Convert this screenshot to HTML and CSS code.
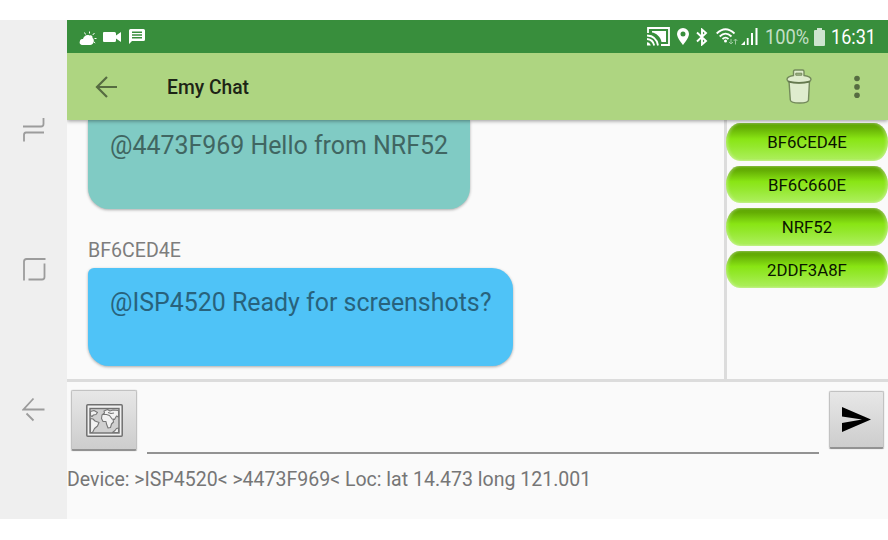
FILE: index.html
```html
<!DOCTYPE html>
<html lang="en">
<head>
<meta charset="utf-8">
<title>Emy Chat</title>
<link rel="stylesheet" href="styles.css">
</head>
<body>
<div class="device">
  <nav class="navbar">
    <svg class="nav-icon" viewBox="0 0 24 26"><path d="M1 9.500H19Q21.500 9.500 21.500 7V1M22 15.500H4Q2 15.500 2 18V24.500"/></svg>
    <svg class="nav-icon" viewBox="0 0 24 26"><path d="M2 23.500V4.500Q2 2 4.500 2H23.500M22.500 6.500V20Q22.500 22.500 20 22.500H6.500"/></svg>
    <svg class="nav-icon" viewBox="0 0 24 26"><path d="M11.500 1.500L1.500 12.500H22.500M4.500 16.500L11.500 23.500"/></svg>
  </nav>
  <main class="screen">
    <header class="status">
      <svg class="st-weather" viewBox="0 0 18 14"><path fill="#fff" d="M4 14C1 14 0 12 1 10C1 8.500 2.500 8 4 8C4.500 5 8 3 10.500 4.500C12 3.500 14 5 13.500 7C15.500 8 15 12 13.500 13Q12.500 14 11 14Z"/><path stroke="#fff" stroke-width="1" d="M10.500 0.500V2.500M5.500 1.500L6.500 3.500M15.500 2L13.700 4M15.500 7.500H17.500M14.700 10.700L16.200 12"/></svg>
      <svg class="st-video" viewBox="0 0 18 10"><path fill="#fff" d="M1 0H11.500Q13 0 13 1.500V3.500L18 0V10L13 6.500V8.500Q13 10 11.500 10H1Q0 10 0 9V1Q0 0 1 0Z"/></svg>
      <svg class="st-msg" viewBox="0 0 16 15"><path fill="#fff" fill-rule="evenodd" d="M1.500 0H14.500Q16 0 16 1.500V10.500Q16 12 14.500 12H3L0 15V1.500Q0 0 1.500 0ZM3 2.600V4H13V2.600ZM3 5.300V6.700H13V5.300ZM3 8V9.400H13V8Z"/></svg>
      <span class="spacer"></span>
      <svg class="st-cast" viewBox="0 0 23 19"><path fill="none" stroke="#fff" stroke-width="1.800" d="M1 6V1H22V18H14"/><path fill="#fff" d="M5 4H19V15H14.500C13.500 9.500 9 6 5 5.500Z"/><path fill="none" stroke="#fff" stroke-width="1.800" d="M0 8.500Q9.500 9 11 18.500M0 12Q6 12.500 7.200 18.500"/><path fill="#fff" d="M0 15.200Q3 15.500 3.800 18.500H0Z"/></svg>
      <svg class="st-pin" viewBox="0 0 12 17"><path fill="#fff" fill-rule="evenodd" d="M6 0A6 6 0 0 1 12 6C12 10 6 17 6 17S0 10 0 6A6 6 0 0 1 6 0ZM6 3.600A2.500 2.500 0 1 0 6 8.600A2.500 2.500 0 1 0 6 3.600Z"/></svg>
      <svg class="st-bt" viewBox="0 0 12 18"><path fill="none" stroke="#fff" stroke-width="1.900" d="M1 4.500L10 13L6 16.500V1.500L10 5L1 13.500"/></svg>
      <svg class="st-wifi" viewBox="0 0 22 18"><g fill="none" stroke="#fff" stroke-width="1.800"><path d="M.7 5.500Q9.500-3 18.500 5.500M3.700 8.500Q9.500 2.700 15.500 8.500M6.500 11Q9.500 8.300 12.500 11"/></g><circle cx="9.500" cy="13" r="1.500" fill="#fff"/><path fill="none" stroke="#9bc99e" d="M15 11V16M13 14L15 16L17 14M19.500 16.500V11M17.700 13L19.500 11L21.300 13"/></svg>
      <svg class="st-signal" viewBox="0 0 17 17"><path fill="#fff" d="M0 17L4 13V17ZM5.800 10H7.600V17H5.800ZM10 5H12V17H10ZM14.500 0H16.500V17H14.500Z"/></svg>
      <span class="percent">100%</span>
      <svg class="st-battery" viewBox="0 0 11 18"><path fill="#cde4cf" d="M3 0H8V2H10Q11 2 11 3V17Q11 18 10 18H1Q0 18 0 17V3Q0 2 1 2H3Z"/></svg>
      <span class="clock">16:31</span>
    </header>
    <header class="appbar">
      <svg class="back" viewBox="0 0 22 22"><path fill="none" stroke="#566c41" stroke-width="2.200" d="M22 11H2M12 1L2 11L12 21"/></svg>
      <h1 class="title">Emy Chat</h1>
      <span class="spacer"></span>
      <svg class="trash" viewBox="0 0 26 35"><g fill="#dfecce" stroke="#748a5c" stroke-width="1.400"><path d="M3 12L4.300 31Q4.500 34 13.500 34T22.500 31L23.500 12Z"/><path d="M7.500 6.500V2.500Q7.500 1 9 1H16.500Q18 1 18 2.500V6.500Q25 7.500 25 10.500Q25 13.800 13 13.800T1 10.500Q1 7.500 7.500 6.500Z"/><path fill="#a4b98d" stroke-width="1" d="M9.800 4.200H15.800V6.200H9.800Z"/></g><path stroke="#65794f" stroke-width="1.700" fill="none" d="M2 12.300Q5 13.800 13 13.800T24 12.300"/></svg>
      <svg class="more" viewBox="0 0 6 24"><g fill="#566c41"><circle cx="3" cy="3.500" r="2.800"/><circle cx="3" cy="11.900" r="2.800"/><circle cx="3" cy="20.300" r="2.800"/></g></svg>
    </header>
    <div class="content">
      <section class="chat">
        <div class="bubble teal">@4473F969 Hello from NRF52</div>
        <div class="sender">BF6CED4E</div>
        <div class="bubble blue">@ISP4520 Ready for screenshots?</div>
      </section>
      <aside class="members">
        <button class="member">BF6CED4E</button>
        <button class="member">BF6C660E</button>
        <button class="member">NRF52</button>
        <button class="member">2DDF3A8F</button>
      </aside>
    </div>
    <div class="composer">
      <button class="tile map" aria-label="Map">
        <svg viewBox="0 0 37 33"><rect x=".8" y=".8" width="35.400" height="31.400" rx="1" fill="#f0f0f0" stroke="#707070" stroke-width="1.500"/><rect x="4" y="4.500" width="29" height="24.500" fill="#d0d0d0" stroke="#707070" stroke-width="1.400"/><g fill="#f2f2f2" stroke="#777" stroke-width="1.100" stroke-linejoin="round"><path d="M4.500 7.500L8 6.500L11.500 8.500L10 10.500L7.500 11L6 12.500L4.500 11.500ZM4.500 14.500L7 15L9 17L13 18.500L11.500 22L8.500 24.500L6.500 28.500H4.500Z"/><path d="M15.500 14.500L16 11L18.500 9L18 7L21.500 5.500L24 7L27 6L32.500 6.500V13L30.500 12L28.500 15.500L27 15L27.500 18L25.500 20L24.500 23.500L22 24L20.500 20L20 17.500L17 17.500ZM26.500 28.500L29 26.500L30.500 24.500L32.500 24V28.500Z"/><path fill="none" d="M17 10.500L20.500 10.500L23.500 11.500L26.500 15.500M22 8.500L25 9.500L28 9"/></g></svg>
      </button>
      <div class="input"></div>
      <button class="tile send" aria-label="Send">
        <svg viewBox="0 0 29 25"><path d="M0 0L29 12.500L0 25V16L20 12.500L0 9.500Z"/></svg>
      </button>
    </div>
    <footer class="info">Device: &gt;ISP4520&lt; &gt;4473F969&lt; Loc: lat 14.473 long 121.001</footer>
  </main>
</div>
</body>
</html>
```
FILE: styles.css
```css
* { box-sizing: border-box; }
body { margin: 0; padding-top: 20px; height: 540px; background: #fff; font-family: Roboto, sans-serif; overflow: hidden; }
svg { display: block; flex: none; }
button { border: 0; padding: 0; font-family: inherit; }
.device { display: flex; width: 888px; height: 499px; }
.navbar { width: 67px; flex: none; background: #efefef; display: flex; flex-direction: column; gap: 114px; padding: 97px 0 0 22px; }
.nav-icon { width: 24px; height: 26px; fill: none; stroke: #9c9c9c; stroke-width: 1.8; }
.screen { flex: 1; display: flex; flex-direction: column; background: #fafafa; min-width: 0; }
.spacer { flex: 1; }

.status { height: 33px; flex: none; background: #388e3c; display: flex; align-items: center; padding: 0 12px 0 12px; color: #fff; }
.st-weather { width: 18px; height: 14px; margin-top: 2px; }
.st-video { width: 18px; height: 10px; margin: 1px 0 0 6px; }
.st-msg { width: 16px; height: 15px; margin-left: 8px; }
.st-cast { width: 23px; height: 19px; }
.st-pin { width: 12px; height: 17px; margin-left: 7px; }
.st-bt { width: 12px; height: 18px; margin-left: 7px; }
.st-wifi { width: 22px; height: 18px; margin-left: 8px; }
.st-signal { width: 17px; height: 17px; margin-left: 3px; }
.percent { width: 43px; margin: 1px 0 0 7px; font-size: 21px; color: #c3dfc5; white-space: nowrap; transform: scaleX(.87); transform-origin: 0 50%; }
.st-battery { width: 11px; height: 18px; margin-left: 6px; }
.clock { width: 45px; margin: 1px 0 0 6px; font-size: 21px; white-space: nowrap; transform: scaleX(.86); transform-origin: 0 50%; }

.appbar { height: 67px; flex: none; background: #aed581; display: flex; align-items: center; padding: 0 28px; box-shadow: 0 1px 4px rgba(0,0,0,.4); position: relative; z-index: 1; clip-path: inset(0 0 -8px 0); }
.back { width: 22px; height: 22px; }
.title { margin: 2px 0 0 50px; font-size: 19.3px; font-weight: 500; color: #1d2416; }
.trash { width: 26px; height: 35px; margin-right: 42px; }
.more { width: 6px; height: 24px; }

.content { height: 262px; flex: none; display: flex; border-bottom: 3px solid #dcdcdc; overflow: hidden; }
.chat { flex: 1; padding-left: 21px; display: flex; flex-direction: column; align-items: flex-start; }
.bubble { padding-left: 22px; font-size: 24.93px; line-height: 30px; white-space: nowrap; box-shadow: 0 1px 3px rgba(0,0,0,.32); }
.teal { width: 382px; height: 88.5px; flex: none; padding-top: 11px; border-radius: 0 0 21px 21px; background: #80cbc4; color: #406662; }
.blue { width: 425px; height: 98px; flex: none; padding-top: 20.5px; border-radius: 6px 21px 21px 21px; background: #4fc3f7; color: #28627c; }
.sender { height: 59px; padding-top: 30px; font-size: 19.8px; line-height: 23px; color: #7d7d7d; transform: scaleX(.99); transform-origin: 0 0; }
.members { width: 164px; border-left: 3px solid #dcdcdc; display: flex; flex-direction: column; gap: 5px; padding-top: 3px; }
.member { height: 37.5px; flex: none; margin-left: -1px; border-radius: 14px / 19px; background: linear-gradient(#5fa603, #64ad04 12%, #89e514 42%, #94e82d 62%, #aef060); font-size: 16.8px; line-height: 38px; color: #0b1500; box-shadow: inset 2px 0 3px rgba(250,250,250,.3), inset -2px 0 3px rgba(250,250,250,.3); }

.composer { height: 85px; flex: none; display: flex; padding: 8px 4px 0; }
.tile { display: flex; align-items: center; justify-content: center; border: 1px solid #c2c2c2; border-bottom: 2px solid #929292; border-radius: 2px; background: linear-gradient(#e7e7e7, #cdcdcd); box-shadow: 0 0 1px #999; }
.map { width: 66px; height: 61px; }
.map svg { width: 37px; height: 33px; }
.input { flex: 1; height: 64px; margin: 0 10px; border-bottom: 2px solid #929292; }
.send { width: 55px; height: 58px; margin-top: 1px; }
.send svg { width: 29px; height: 25px; }
.info { font-size: 19.53px; line-height: 26px; color: #767676; white-space: nowrap; }
```
